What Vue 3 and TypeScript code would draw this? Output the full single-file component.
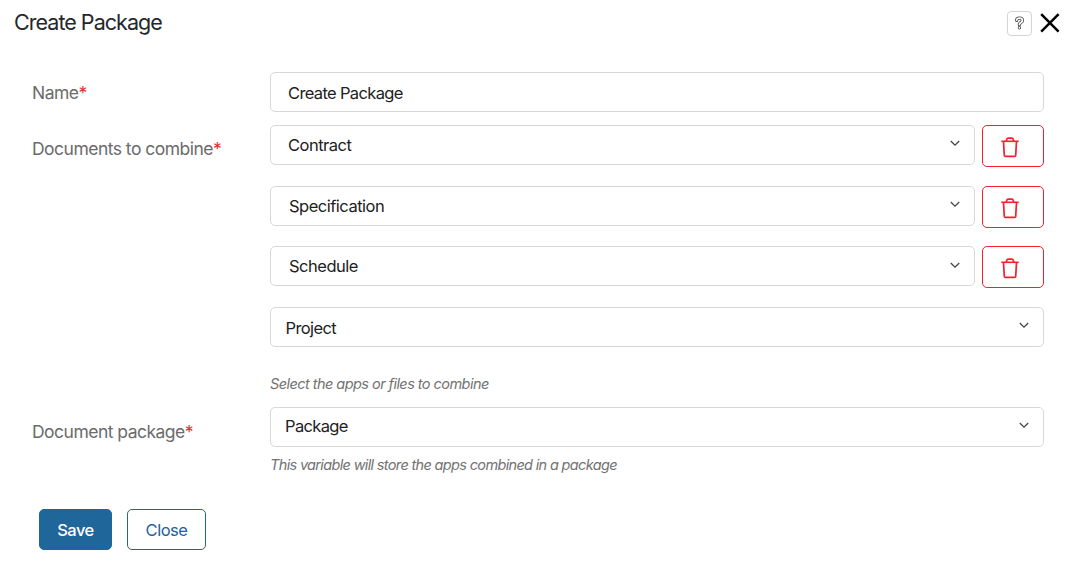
<script setup lang="ts">
interface Choice {
  key: string
  label: string
}

const documents: Choice[] = [
  { key: 'contract', label: 'Contract' },
  { key: 'specification', label: 'Specification' },
  { key: 'schedule', label: 'Schedule' },
]
</script>

<template>
  <div class="dialog">
    <header class="header">
      <h1 class="title">Create Package</h1>
      <div class="tools">
        <button class="help" aria-label="Help">
          <svg width="11" height="15" viewBox="0 0 11 15" fill="none" stroke-linecap="round" stroke-linejoin="round">
            <path d="M2.5 4.2C2.7 2.6 3.9 2.1 5.3 2.1C7.1 2.1 8.4 2.9 8.4 4.4C8.4 6.5 5.5 6.4 5.4 8.6M5.4 11.7v.1" stroke="#4c4c4c" stroke-width="3.4" />
            <path d="M2.5 4.2C2.7 2.6 3.9 2.1 5.3 2.1C7.1 2.1 8.4 2.9 8.4 4.4C8.4 6.5 5.5 6.4 5.4 8.6M5.4 11.7v.1" stroke="#fff" stroke-width="1.7" />
          </svg>
        </button>
        <button class="dismiss" aria-label="Close dialog">
          <svg width="20" height="20" viewBox="0 0 20 20" fill="none" stroke="#000" stroke-width="2.5">
            <path d="M1.2 1.2L18.6 18.6M18.6 1.2L1.2 18.6" />
          </svg>
        </button>
      </div>
    </header>

    <main class="form">
      <div class="label name-label">Name<span class="star">*</span></div>
      <div class="field"><div class="box text">Create Package</div></div>

      <div class="label docs-label">Documents to combine<span class="star">*</span></div>
      <div class="field docs">
        <div v-for="doc in documents" :key="doc.key" class="line" :class="doc.key">
          <div class="box">
            <span class="value">{{ doc.label }}</span>
            <svg class="chevron" width="10" height="7" viewBox="0 0 10 7" fill="none"><path d="M.8 1L5 5.2L9.2 1" /></svg>
          </div>
          <button class="remove" :aria-label="'Remove ' + doc.label">
            <svg width="18" height="21" viewBox="0 0 18 21" fill="none" stroke="#f4202d">
              <path d="M.3 4.3H17.7" stroke-width="1.6" />
              <path d="M5.2 4L5.8 2.2Q6.1 1.2 7.1 1.2H10.9Q11.9 1.2 12.2 2.2L12.8 4" stroke-width="1.7" />
              <path d="M2.5 4.6L3.3 18.4Q3.4 19.4 4.4 19.4H13.6Q14.6 19.4 14.7 18.4L15.5 4.6" stroke-width="1.7" />
            </svg>
          </button>
        </div>
        <div class="box project">
          <span class="value">Project</span>
          <svg class="chevron" width="10" height="7" viewBox="0 0 10 7" fill="none"><path d="M.8 1L5 5.2L9.2 1" /></svg>
        </div>
        <p class="hint apps-hint">Select the apps or files to combine</p>
      </div>

      <div class="label package-label">Document package<span class="star">*</span></div>
      <div class="field">
        <div class="box package">
          <span class="value">Package</span>
          <svg class="chevron" width="10" height="7" viewBox="0 0 10 7" fill="none"><path d="M.8 1L5 5.2L9.2 1" /></svg>
        </div>
        <p class="hint package-hint">This variable will store the apps combined in a package</p>
      </div>
    </main>

    <footer class="actions">
      <button class="action save">Save</button>
      <button class="action close">Close</button>
    </footer>
  </div>
</template>

<style>
body {
  background: #fff;
}
</style>

<style scoped>
.dialog,
.dialog * {
  box-sizing: border-box;
}
.dialog {
  width: 1088px;
  height: 568px;
  overflow: hidden;
  background: #fff;
  font-family: Inter, "Liberation Sans", sans-serif;
  color: #212121;
}
button {
  font: inherit;
  padding: 0;
  background: #fff;
}
.header {
  display: flex;
  justify-content: space-between;
  height: 72px;
  padding: 9px 28px 0 14px;
}
.title {
  margin: 0;
  font-size: 21.5px;
  line-height: 27px;
  font-weight: 400;
  letter-spacing: -0.97px;
  color: #24272b;
}
.tools {
  display: flex;
  gap: 8px;
  padding-top: 2px;
}
.help {
  display: flex;
  align-items: center;
  justify-content: center;
  width: 25px;
  height: 25px;
  border: 1px solid #d4d4d4;
  border-radius: 4px;
}
.dismiss {
  width: 20px;
  height: 20px;
  margin-top: 2px;
  border: 0;
}
.dismiss svg {
  display: block;
}
.form {
  display: grid;
  grid-template-columns: 238px 774px;
  grid-template-rows: 53px 282px 102px;
  padding-left: 32px;
}
.label {
  font-size: 17.5px;
  line-height: 22px;
  letter-spacing: -0.52px;
  color: #6b6b6b;
  white-space: nowrap;
}
.star {
  color: #e23030;
}
.name-label {
  padding-top: 10px;
}
.docs-label {
  padding-top: 13px;
}
.package-label {
  padding-top: 14px;
}
.box {
  display: flex;
  flex: 1;
  align-items: center;
  justify-content: space-between;
  height: 40px;
  padding: 0 14px 0 17px;
  border: 1px solid #d8d8d8;
  border-radius: 5px;
  font-size: 16.5px;
  line-height: 20px;
  letter-spacing: -0.5px;
}
.text {
  padding-top: 1px;
  letter-spacing: -0.65px;
}
.line {
  display: flex;
  gap: 7px;
  height: 42px;
  margin-bottom: 19px;
}
.specification {
  margin-bottom: 18px;
}
.specification .box,
.schedule .box {
  padding-left: 18px;
}
.chevron {
  margin-bottom: 3px;
  stroke: #454545;
  stroke-width: 1.3;
}
.schedule .chevron {
  margin-bottom: 1px;
}
.project {
  padding-top: 2px;
  padding-left: 14.5px;
  letter-spacing: -0.6px;
}
.project .chevron {
  margin-bottom: 5px;
}
.package {
  padding-left: 14px;
  letter-spacing: -0.65px;
}
.package .value {
  padding-bottom: 2px;
}
.remove {
  display: flex;
  justify-content: center;
  align-items: center;
  width: 62px;
  height: 42px;
  padding: 3px 7px 0 0;
  border: 1px solid #f4202d;
  border-radius: 5px;
}
.hint {
  margin: 0;
  font-size: 14.5px;
  line-height: 18px;
  font-style: italic;
  letter-spacing: -0.55px;
  color: #727272;
}
.apps-hint {
  padding-top: 28px;
}
.package-hint {
  padding-top: 9px;
  letter-spacing: -0.66px;
}
.actions {
  display: flex;
  gap: 15px;
  padding-left: 39px;
}
.action {
  height: 41px;
  border: 1px solid #1f669b;
  border-radius: 5px;
  font-size: 16.5px;
  letter-spacing: -0.5px;
}
.save {
  width: 73px;
  background: #1f669b;
  color: #fff;
  font-weight: 500;
}
.close {
  width: 79px;
  color: #24629c;
}
</style>
